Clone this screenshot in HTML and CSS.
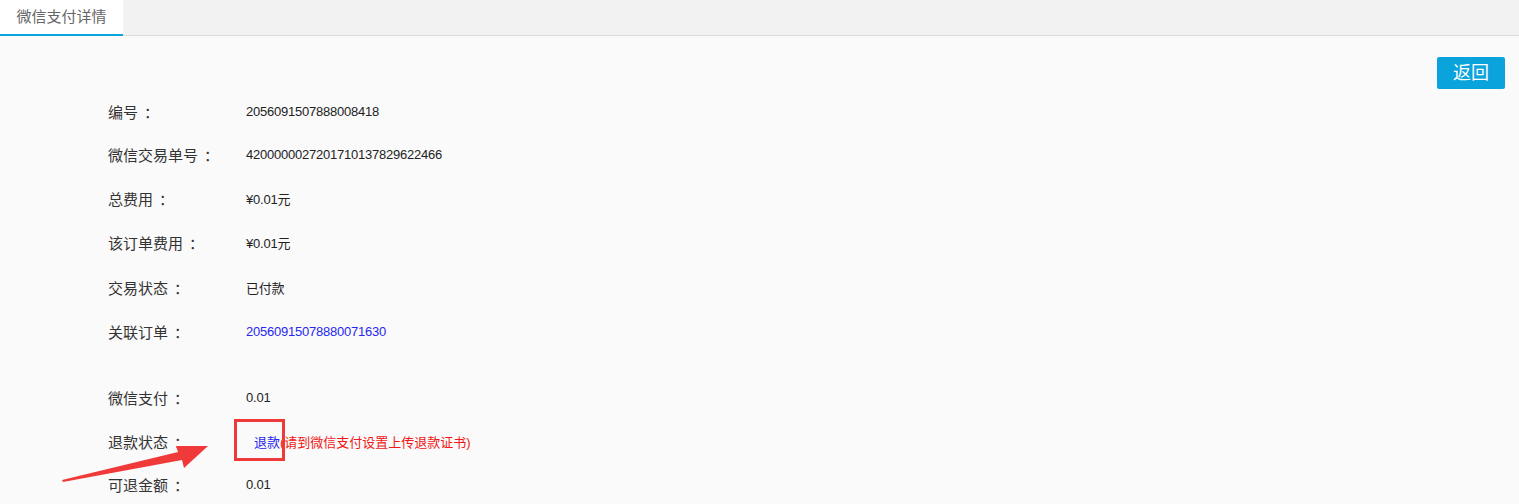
FILE: index.html
```html
<!DOCTYPE html>
<html lang="zh-CN">
<head>
    <meta charset="UTF-8">
    <title>微信支付详情</title>
    <link rel="stylesheet" href="styles.css">
</head>
<body>
    <div class="tabs">
        <div class="tab active">微信支付详情</div>
    </div>

    <div class="content">
        <div class="toolbar">
            <a href="#" class="btn">返回</a>
        </div>

        <div class="detail">
            <div class="row"><span class="label">编号<i>：</i></span><span class="value">2056091507888008418</span></div>
            <div class="row"><span class="label">微信交易单号<i>：</i></span><span class="value">4200000027201710137829622466</span></div>
            <div class="row"><span class="label">总费用<i>：</i></span><span class="value">¥0.01元</span></div>
            <div class="row"><span class="label">该订单费用<i>：</i></span><span class="value">¥0.01元</span></div>
            <div class="row"><span class="label">交易状态<i>：</i></span><span class="value">已付款</span></div>
            <div class="row"><span class="label">关联订单<i>：</i></span><a href="#" class="value link">20560915078880071630</a></div>
        </div>

        <div class="detail pay">
            <div class="row"><span class="label">微信支付<i>：</i></span><span class="value">0.01</span></div>
            <div class="row"><span class="label">退款状态<i>：</i></span><span class="value refund"><a href="#" class="link">退款</a><span class="warn">(请到微信支付设置上传退款证书)</span></span></div>
            <div class="row"><span class="label">可退金额<i>：</i></span><span class="value">0.01</span></div>
        </div>

        <!-- annotation overlay -->
        <div class="mark-box"></div>
        <svg class="mark-arrow" width="160" height="50" viewBox="0 0 160 50">
            <polygon points="2,46 118,18 116,12 148,12 124,34 122,26 3,48" fill="#f03a3a"/>
        </svg>
    </div>
</body>
</html>
```

FILE: styles.css
```css
body {
    margin: 0;
    background: #fafafa;
    font-family: "Liberation Sans", Arial, "Noto Sans CJK SC", sans-serif;
    color: #222;
}
.tabs {
    display: flex;
    height: 35px;
    background: #f2f2f2;
    border-bottom: 1px solid #dcdcdc;
}
.tab {
    width: 123px;
    text-align: center;
    font-size: 15px;
    line-height: 34px;
    color: #666;
}
.tab.active {
    background: #fff;
    border-bottom: 2px solid #0aa3dc;
    height: 34px;
    margin-bottom: -1px;
}
.content {
    position: relative;
    padding: 0 14px 0 108px;
}
.toolbar {
    display: flex;
    justify-content: flex-end;
    padding-top: 21px;
}
.btn {
    display: inline-block;
    width: 68px;
    height: 32px;
    line-height: 32px;
    text-align: center;
    background: #0aa3dc;
    color: #fff;
    font-size: 18px;
    border-radius: 2px;
    text-decoration: none;
}
.detail {
    padding-top: 1px;
}
.row {
    display: flex;
    align-items: center;
    height: 44.4px;
}
.detail .row:first-child {
    height: 42px;
}
.pay {
    margin-top: 22px;
    padding-top: 0;
}
.pay .row,
.pay .row:first-child {
    height: 43.5px;
}
.label {
    width: 138px;
    font-size: 15px;
    color: #333;
}
.label i {
    font-style: normal;
    margin-left: 6px;
}
.value {
    font-size: 13px;
    letter-spacing: -0.23px;
    color: #222;
}
.link {
    color: #2727f0;
    text-decoration: none;
}
.refund {
    padding-left: 8px;
    letter-spacing: 0;
}
.warn {
    color: #f01818;
}
.mark-box {
    position: absolute;
    left: 234px;
    top: 383px;
    width: 45px;
    height: 36px;
    border: 3px solid #f03a3a;
}
.mark-arrow {
    position: absolute;
    left: 60px;
    top: 398px;
}
```
